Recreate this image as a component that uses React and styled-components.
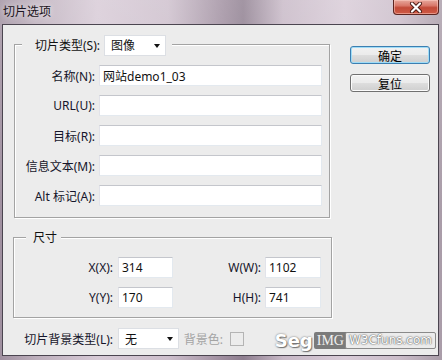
import styled, { createGlobalStyle } from "styled-components";

const GlobalStyle = createGlobalStyle`
  html, body { margin: 0; padding: 0; background: #fff; }
  body {
    font-family: "Noto Sans", "Noto Sans CJK SC", sans-serif;
    font-size: 12px;
    color: #111;
  }
  * { box-sizing: border-box; }
`;

const Window = styled.div`
  position: relative;
  width: 442px;
  height: 360px;
  padding: 0 3px 4px 2px;
  display: flex;
  flex-direction: column;
  overflow: hidden;
  background:
    linear-gradient(180deg, rgba(255,255,255,0.18) 0%, rgba(255,255,255,0) 60%),
    linear-gradient(90deg, #a090a0 0%, #bcaebb 8%, #d7cad6 22%, #cdbfcc 38%, #a08fa0 50%, #8e7e8f 55%, #c7b8c6 64%, #d8cbd7 78%, #cbbdca 90%, #a99ca8 100%);
`;

const TitleBar = styled.div`
  height: 24px;
  display: flex;
  justify-content: space-between;
  align-items: flex-start;
`;

const Title = styled.div`
  margin: 3px 0 0 1px;
  font-family: "Noto Sans CJK SC", sans-serif;
  font-size: 12px;
  line-height: 16px;
  color: #1a1420;
  text-shadow: 0 0 6px rgba(255,255,255,0.9);
`;

const CloseButton = styled.div`
  width: 46px;
  height: 15px;
  display: flex;
  align-items: center;
  justify-content: center;
  border: 1px solid #5d2520;
  border-top: none;
  border-radius: 0 0 4px 4px;
  background: linear-gradient(180deg, #e7a89c 0%, #d9786a 40%, #c24a38 55%, #cf5a45 100%);
  box-shadow: inset 0 0 0 1px rgba(255,210,200,0.5);
`;

const Client = styled.div`
  flex: 1;
  display: flex;
  border: 1px solid #4b4550;
  background: #ececec;
`;

const LeftColumn = styled.div`
  padding: 19px 0 0 10px;
  display: flex;
  flex-direction: column;
`;

const RightColumn = styled.div`
  margin-left: 18px;
  padding-top: 21px;
  display: flex;
  flex-direction: column;
  gap: 10px;
`;

const GroupBox = styled.div`
  width: ${(p) => p.$width}px;
  margin-left: ${(p) => p.$offset || 0}px;
  margin-top: ${(p) => p.$top || 0}px;
  padding-bottom: ${(p) => p.$bottom}px;
  border: 1px solid #a3a3a3;
  box-shadow: inset 1px 1px 0 #fff, 1px 1px 0 #fff;
  display: flex;
  flex-direction: column;
`;

const Legend = styled.div`
  align-self: flex-start;
  display: flex;
  align-items: center;
  gap: 4px;
  margin-top: ${(p) => p.$lift}px;
  margin-left: ${(p) => p.$left}px;
  padding: ${(p) => p.$pad};
  background: #ececec;
  line-height: 16px;
`;

const Rows = styled.div`
  margin-top: ${(p) => p.$top}px;
  display: flex;
  flex-direction: column;
  gap: 9px;
`;

const Row = styled.div`
  display: flex;
  align-items: center;
  height: 21px;
`;

const Label = styled.div`
  width: ${(p) => p.$width}px;
  margin-right: ${(p) => p.$gap}px;
  text-align: right;
  white-space: nowrap;
  color: ${(p) => (p.$muted ? "#a4a4a4" : "#15152a")};
`;

const TextInput = styled.div`
  width: ${(p) => p.$width}px;
  height: 21px;
  padding-left: ${(p) => p.$pad || 3}px;
  display: flex;
  align-items: center;
  background: #fff;
  border: 1px solid;
  border-color: #c4c6cc #e3e9ef #e3e9ef #e2e3ea;
  color: #111;
  white-space: nowrap;
`;

const Select = styled.div`
  position: relative;
  width: ${(p) => p.$width}px;
  height: ${(p) => p.$height || 21}px;
  padding-left: 6px;
  display: flex;
  align-items: center;
  background: #fff;
  border: 1px solid #dcdfe4;
  color: #111;
`;

const Arrow = styled.span`
  position: absolute;
  right: 5px;
  top: 50%;
  margin-top: -2px;
  width: 0;
  height: 0;
  border-left: 3px solid transparent;
  border-right: 3px solid transparent;
  border-top: 4px solid #111;
`;

const BottomRow = styled.div`
  margin-top: 10px;
  display: flex;
  align-items: center;
  height: 21px;
`;

const Checkbox = styled.div`
  width: 14px;
  height: 14px;
  margin-left: 7px;
  border: 1px solid #b4b4b4;
  background: #ececec;
`;

const Button = styled.div`
  width: 80px;
  height: 18px;
  display: flex;
  align-items: center;
  justify-content: center;
  border: 1px solid ${(p) => (p.$default ? "#3c7fb1" : "#707070")};
  border-radius: 3px;
  background: linear-gradient(180deg, #f2f2f2 0%, #ebebeb 48%, #dddddd 52%, #cfcfcf 100%);
  box-shadow: ${(p) => (p.$default ? "inset 0 0 0 1px #9fdcf7" : "inset 0 0 0 1px #fbfbfb")};
  font-family: "Noto Sans CJK SC", sans-serif;
  font-size: 12px;
  color: #000;
`;

const Watermark = styled.div`
  position: absolute;
  right: 6px;
  bottom: 9px;
  display: flex;
  align-items: center;
  font-family: "DejaVu Sans", sans-serif;
`;

const WaterSeg = styled.span`
  font-size: 18px;
  font-weight: bold;
  color: #fff;
  text-shadow: 0 0 2px #666, 1px 1px 1px #777;
  margin-right: 1px;
`;

const WaterImg = styled.span`
  background: #7b7b7b;
  color: #f0f0f0;
  font-family: "Liberation Serif", serif;
  font-size: 14px;
  padding: 0 4px 0 3px;
  line-height: 17px;
  border-radius: 2px 0 0 2px;
`;

const WaterSite = styled.span`
  background: #ececec;
  border: 1px solid #8a8a8a;
  border-radius: 2px;
  color: #fff;
  text-shadow: 0 0 2px #555, 0 0 1px #444;
  font-size: 12px;
  line-height: 15px;
  padding: 0 3px;
  margin-left: -3px;
`;

function CloseGlyph() {
  return (
    <svg width="14" height="11" viewBox="0 0 14 11">
      <path d="M3 1.5 L11 9.5 M11 1.5 L3 9.5" stroke="#4a1a14" strokeWidth="4" strokeLinecap="round" />
      <path d="M3 1.5 L11 9.5 M11 1.5 L3 9.5" stroke="#fff" strokeWidth="2.2" strokeLinecap="round" />
    </svg>
  );
}

const fields = [
  { label: "名称(N):", value: "网站demo1_03" },
  { label: "URL(U):", value: "" },
  { label: "目标(R):", value: "" },
  { label: "信息文本(M):", value: "" },
  { label: "Alt 标记(A):", value: "" },
];

const sizes = [
  ["X(X):", "314", "W(W):", "1102"],
  ["Y(Y):", "170", "H(H):", "741"],
];

export default function App() {
  return (
    <Window>
      <GlobalStyle />
      <TitleBar>
        <Title>切片选项</Title>
        <CloseButton>
          <CloseGlyph />
        </CloseButton>
      </TitleBar>
      <Client>
        <LeftColumn>
          <GroupBox $width={316} $offset={1} $bottom={11}>
            <Legend $lift={-10} $left={7} $pad="0 6px 0 13px">
              <span>切片类型(S):</span>
              <Select $width={62}>
                图像
                <Arrow />
              </Select>
            </Legend>
            <Rows $top={9}>
              {fields.map((f) => (
                <Row key={f.label}>
                  <Label $width={80} $gap={4}>{f.label}</Label>
                  <TextInput $width={223}>{f.value}</TextInput>
                </Row>
              ))}
            </Rows>
          </GroupBox>

          <GroupBox $width={319} $top={19} $bottom={9}>
            <Legend $lift={-8} $left={12} $pad="0 4px 0 7px">
              尺寸
            </Legend>
            <Rows $top={11}>
              {sizes.map(([l1, v1, l2, v2]) => (
                <Row key={l1}>
                  <Label $width={99} $gap={5}>{l1}</Label>
                  <TextInput $width={55}>{v1}</TextInput>
                  <Label $width={88} $gap={4}>{l2}</Label>
                  <TextInput $width={56}>{v2}</TextInput>
                </Row>
              ))}
            </Rows>
          </GroupBox>

          <BottomRow>
            <Label $width={100} $gap={5}>切片背景类型(L):</Label>
            <Select $width={61} $height={21}>
              无
              <Arrow />
            </Select>
            <Label $width={44} $gap={0} $muted>背景色:</Label>
            <Checkbox />
          </BottomRow>
        </LeftColumn>

        <RightColumn>
          <Button $default>确定</Button>
          <Button>复位</Button>
        </RightColumn>
      </Client>
      <Watermark>
        <WaterSeg>Seg</WaterSeg>
        <WaterImg>IMG</WaterImg>
        <WaterSite>W3Cfuns.com</WaterSite>
      </Watermark>
    </Window>
  );
}
